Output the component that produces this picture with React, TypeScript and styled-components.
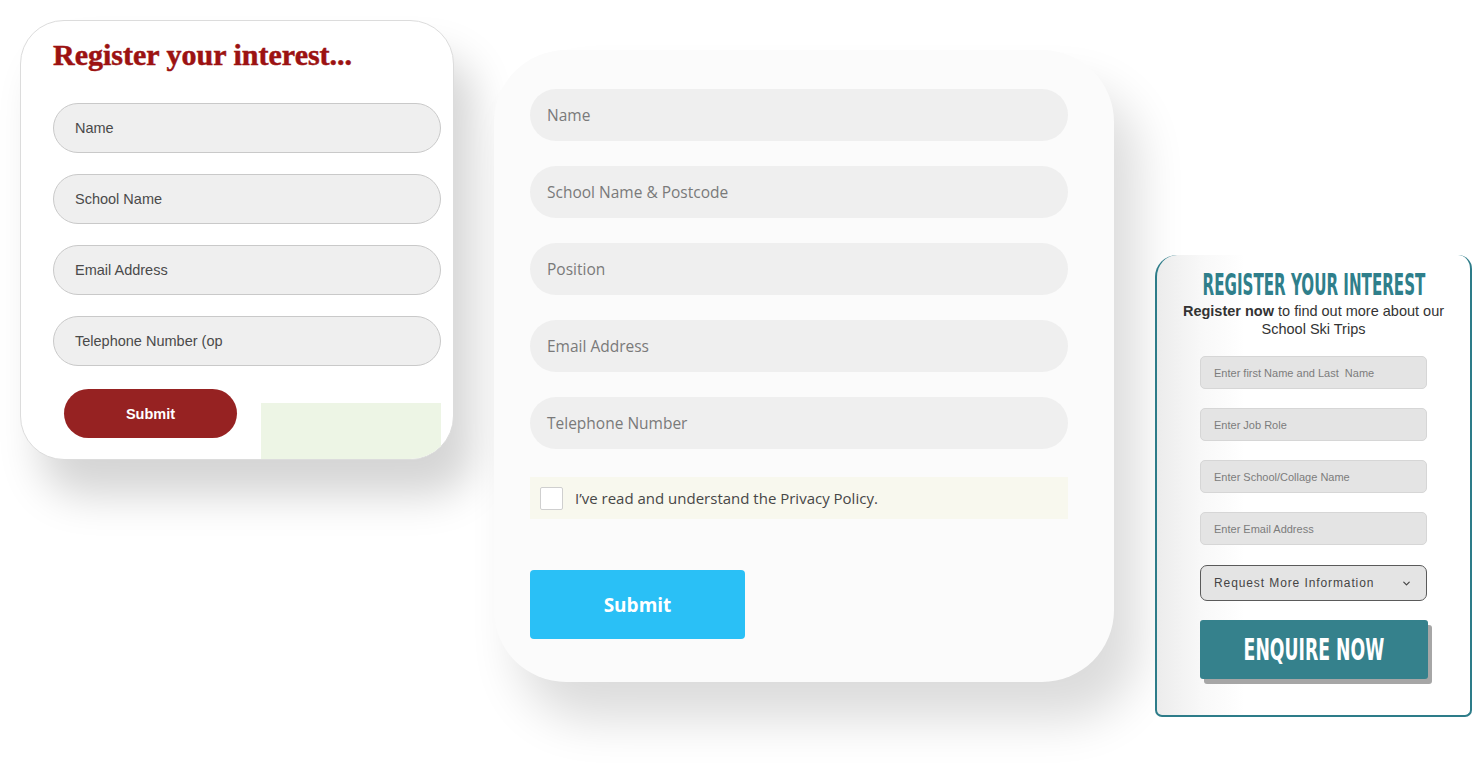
import React from 'react';
import styled, { createGlobalStyle } from 'styled-components';
import { ChevronDown } from 'lucide-react';

const GlobalStyle = createGlobalStyle`
    html, body {
        margin: 0;
        padding: 0;
        background: #ffffff;
    }
    * {
        box-sizing: border-box;
    }
`

export default function App() {
    return (
        <>
            <GlobalStyle />
            <Canvas>
                <RedCard>
                    <RedTitle>Register your interest...</RedTitle>
                    <RedFields>
                        <RedField><RedText>Name</RedText></RedField>
                        <RedField><RedText>School Name</RedText></RedField>
                        <RedField><RedText>Email Address</RedText></RedField>
                        <RedField><RedText>Telephone Number (op</RedText></RedField>
                    </RedFields>
                    <RedFooter>
                        <RedButton>Submit</RedButton>
                        <GreenPatch />
                    </RedFooter>
                </RedCard>

                <BlueCard>
                    <BlueFields>
                        <BlueField>Name</BlueField>
                        <BlueField>School Name &amp; Postcode</BlueField>
                        <BlueField>Position</BlueField>
                        <BlueField>Email Address</BlueField>
                        <BlueField>Telephone Number</BlueField>
                    </BlueFields>
                    <ConsentRow>
                        <CheckBox />
                        <ConsentText>I’ve read and understand the Privacy Policy.</ConsentText>
                    </ConsentRow>
                    <BlueButton>Submit</BlueButton>
                </BlueCard>

                <TealCard>
                    <TealTitle>REGISTER YOUR INTEREST</TealTitle>
                    <TealIntro>
                        <b>Register now</b> to find out more about our<br />
                        School Ski Trips
                    </TealIntro>
                    <TealFields>
                        <TealField>Enter first Name and Last&nbsp; Name</TealField>
                        <TealField>Enter Job Role</TealField>
                        <TealField>Enter School/Collage Name</TealField>
                        <TealField>Enter Email Address</TealField>
                        <TealSelect>
                            Request More Information
                            <ChevronDown size={11} strokeWidth={2.6} color="#444" />
                        </TealSelect>
                    </TealFields>
                    <TealButton><ButtonLabel>ENQUIRE NOW</ButtonLabel></TealButton>
                </TealCard>
            </Canvas>
        </>
    );
}

const Canvas = styled.main`
    display: flex;
    align-items: flex-start;
    width: 1474px;
    height: 782px;
    padding: 20px 0 0 20px;
    overflow: hidden;
`

/* ---------- card 1 ---------- */

const RedCard = styled.section`
    width: 434px;
    height: 440px;
    flex-shrink: 0;
    background: #ffffff;
    border-radius: 44px;
    border: 1px solid #dcdcdc;
    box-shadow: 20px 36px 42px rgba(0, 0, 0, 0.17);
    padding: 17px 12px 0 32px;
    display: flex;
    flex-direction: column;
    overflow: hidden;
`
const RedTitle = styled.h1`
    margin: 0 0 31px;
    font-family: "Liberation Serif", serif;
    font-weight: 700;
    font-size: 30px;
    letter-spacing: 0;
    line-height: 34px;
    white-space: nowrap;
    color: #9c1212;
    -webkit-text-stroke: 0.5px #9c1212;
`
const RedFields = styled.div`
    display: flex;
    flex-direction: column;
    gap: 21px;
`
const RedField = styled.div`
    height: 50px;
    border-radius: 25px;
    border: 1px solid #c9c9c9;
    background: #efefef;
    display: flex;
    align-items: center;
    padding-left: 21px;
`
const RedText = styled.span`
    font-family: "Liberation Sans", Arial, sans-serif;
    font-size: 14.5px;
    color: #4a4a4a;
    white-space: nowrap;
`
const RedFooter = styled.div`
    flex: 1;
    display: flex;
    align-items: flex-start;
    justify-content: space-between;
    margin-top: 23px;
    padding-left: 11px;
`
const RedButton = styled.button`
    width: 173px;
    height: 49px;
    border: none;
    border-radius: 25px;
    background: #962222;
    color: #ffffff;
    font-family: "Liberation Sans", Arial, sans-serif;
    font-weight: 700;
    font-size: 14.5px;
`
const GreenPatch = styled.div`
    width: 180px;
    align-self: stretch;
    margin-top: 14px;
    background: #edf5e5;
`

/* ---------- card 2 ---------- */

const BlueCard = styled.section`
    width: 620px;
    height: 632px;
    flex-shrink: 0;
    margin: 30px 0 0 40px;
    background: #fbfbfb;
    border-radius: 72px;
    box-shadow: 24px 38px 48px rgba(0, 0, 0, 0.14);
    padding: 39px 46px 0 36px;
    display: flex;
    flex-direction: column;
`
const BlueFields = styled.div`
    display: flex;
    flex-direction: column;
    gap: 25px;
`
const BlueField = styled.div`
    height: 52px;
    border-radius: 26px;
    background: #efefef;
    display: flex;
    align-items: center;
    padding-left: 17px;
    font-family: "Open Sans", "Noto Sans", sans-serif;
    font-size: 15.5px;
    color: #7a7a7a;
`
const ConsentRow = styled.label`
    margin-top: 28px;
    height: 42px;
    background: #f8f8ee;
    display: flex;
    align-items: center;
    gap: 12px;
    padding-left: 10px;
`
const CheckBox = styled.span`
    width: 23px;
    height: 23px;
    border: 1.5px solid #cfcfcf;
    border-radius: 2px;
    background: #ffffff;
`
const ConsentText = styled.span`
    font-family: "Open Sans", "Noto Sans", sans-serif;
    font-size: 15px;
    color: #474747;
`
const BlueButton = styled.button`
    margin-top: 51px;
    width: 215px;
    height: 69px;
    border: none;
    border-radius: 4px;
    background: #2ac0f6;
    color: #ffffff;
    font-family: "Open Sans", "Noto Sans", sans-serif;
    font-weight: 700;
    font-size: 19px;
`

/* ---------- card 3 ---------- */

const TealCard = styled.section`
    width: 317px;
    height: 462px;
    flex-shrink: 0;
    margin: 235px 0 0 41px;
    background: linear-gradient(90deg, #ececec 0%, #f8f8f8 14%, #ffffff 28%);
    border: 2px solid #2d7c89;
    border-top: none;
    border-radius: 22px 14px 7px 7px;
    padding: 15px 0 0;
    display: flex;
    flex-direction: column;
    align-items: center;
`
const TealTitle = styled.h2`
    margin: 0;
    font-family: "DejaVu Sans Condensed", "Liberation Sans", sans-serif;
    font-weight: 700;
    font-size: 30px;
    line-height: 30px;
    white-space: nowrap;
    color: #2f7f8b;
    transform: scaleX(0.56);
`
const TealIntro = styled.p`
    margin: 2px 0 0;
    text-align: center;
    font-family: "Liberation Sans", Arial, sans-serif;
    font-size: 14.5px;
    line-height: 18px;
    color: #333333;
    b {
        font-weight: 700;
    }
`
const TealFields = styled.div`
    margin-top: 18px;
    width: 227px;
    display: flex;
    flex-direction: column;
    gap: 19px;
`
const TealField = styled.div`
    height: 33px;
    border-radius: 5px;
    border: 1px solid #d6d6d6;
    background: #e4e4e4;
    display: flex;
    align-items: center;
    padding-left: 13px;
    font-family: "Liberation Sans", Arial, sans-serif;
    font-size: 11px;
    color: #7c7c7c;
`
const TealSelect = styled.div`
    height: 36px;
    margin-top: 1px;
    border-radius: 7px;
    border: 1.5px solid #5a5a5a;
    background: #e4e4e4;
    display: flex;
    align-items: center;
    justify-content: space-between;
    padding: 0 14px 0 13px;
    font-family: "Liberation Sans", Arial, sans-serif;
    font-size: 12px;
    letter-spacing: 0.9px;
    color: #444444;
`
const TealButton = styled.button`
    margin-top: 19px;
    width: 228px;
    height: 59px;
    border: none;
    border-radius: 3px;
    background: #35818c;
    box-shadow: 4px 5px 0 #a6a6a6;
    display: flex;
    align-items: center;
    justify-content: center;
    overflow: visible;
`
const ButtonLabel = styled.span`
    font-family: "DejaVu Sans Condensed", "Liberation Sans", sans-serif;
    font-weight: 700;
    font-size: 30px;
    white-space: nowrap;
    color: #ffffff;
    transform: scaleX(0.64);
`
